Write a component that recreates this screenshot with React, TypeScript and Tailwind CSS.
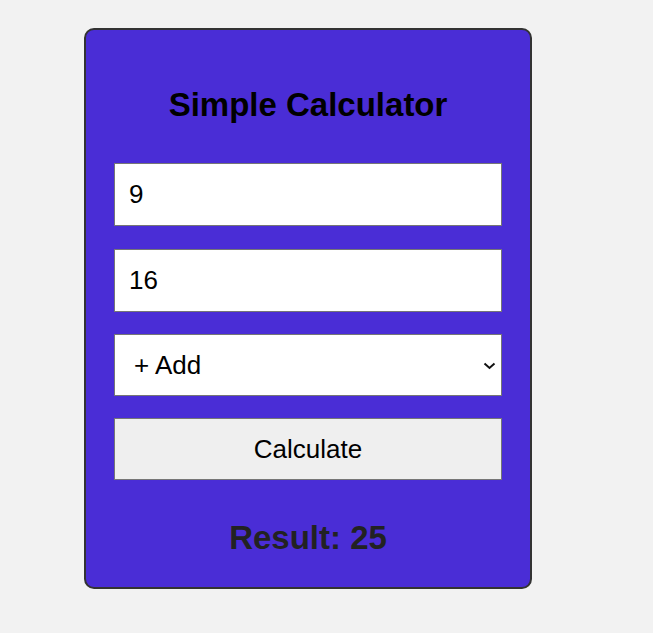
import { useState } from "react";

export default function App() {
  const [a, setA] = useState("9");
  const [b, setB] = useState("16");
  const [op, setOp] = useState("add");
  const [result, setResult] = useState<number | null>(25);

  const calculate = () => {
    const x = parseFloat(a);
    const y = parseFloat(b);
    if (op === "add") setResult(x + y);
    else if (op === "sub") setResult(x - y);
    else if (op === "mul") setResult(x * y);
    else setResult(x / y);
  };

  return (
    <div className="min-h-screen bg-[#f2f2f2] font-['Liberation_Sans',Arial,sans-serif]">
      <div className="pt-[28px] pl-[84px]">
        <div className="w-[448px] h-[561px] bg-[#4a2dd6] border-2 border-[#333] rounded-[10px] px-[28px] pt-[56px]">
          <h1 className="text-[33px] leading-[38px] font-bold text-black text-center">
            Simple Calculator
          </h1>

          <input
            type="number"
            value={a}
            onChange={(e) => setA(e.target.value)}
            className="mt-[39px] block w-full h-[63px] bg-white border border-[#767676] px-[14px] text-[26px] text-black outline-none"
          />
          <input
            type="number"
            value={b}
            onChange={(e) => setB(e.target.value)}
            className="mt-[23px] block w-full h-[63px] bg-white border border-[#767676] px-[14px] text-[26px] text-black outline-none"
          />

          <div className="relative mt-[22px]">
            <select
              value={op}
              onChange={(e) => setOp(e.target.value)}
              className="block w-full h-[62px] appearance-none bg-white border border-[#767676] pl-[19px] text-[26px] text-black outline-none"
            >
              <option value="add">+ Add</option>
              <option value="sub">- Subtract</option>
              <option value="mul">× Multiply</option>
              <option value="div">÷ Divide</option>
            </select>
            <svg
              className="absolute right-[6px] top-[28px] pointer-events-none"
              width="13"
              height="8"
              viewBox="0 0 13 8"
            >
              <path d="M1.5 1.5 L6.5 6 L11.5 1.5" fill="none" stroke="#111" strokeWidth="2" />
            </svg>
          </div>

          <button
            onClick={calculate}
            className="mt-[22px] block w-full h-[62px] bg-[#efefef] border border-[#767676] text-[26px] text-black"
          >
            Calculate
          </button>

          <p className="mt-[39px] text-[33px] leading-[38px] font-bold text-[#222] text-center">
            Result: {result}
          </p>
        </div>
      </div>
    </div>
  );
}
